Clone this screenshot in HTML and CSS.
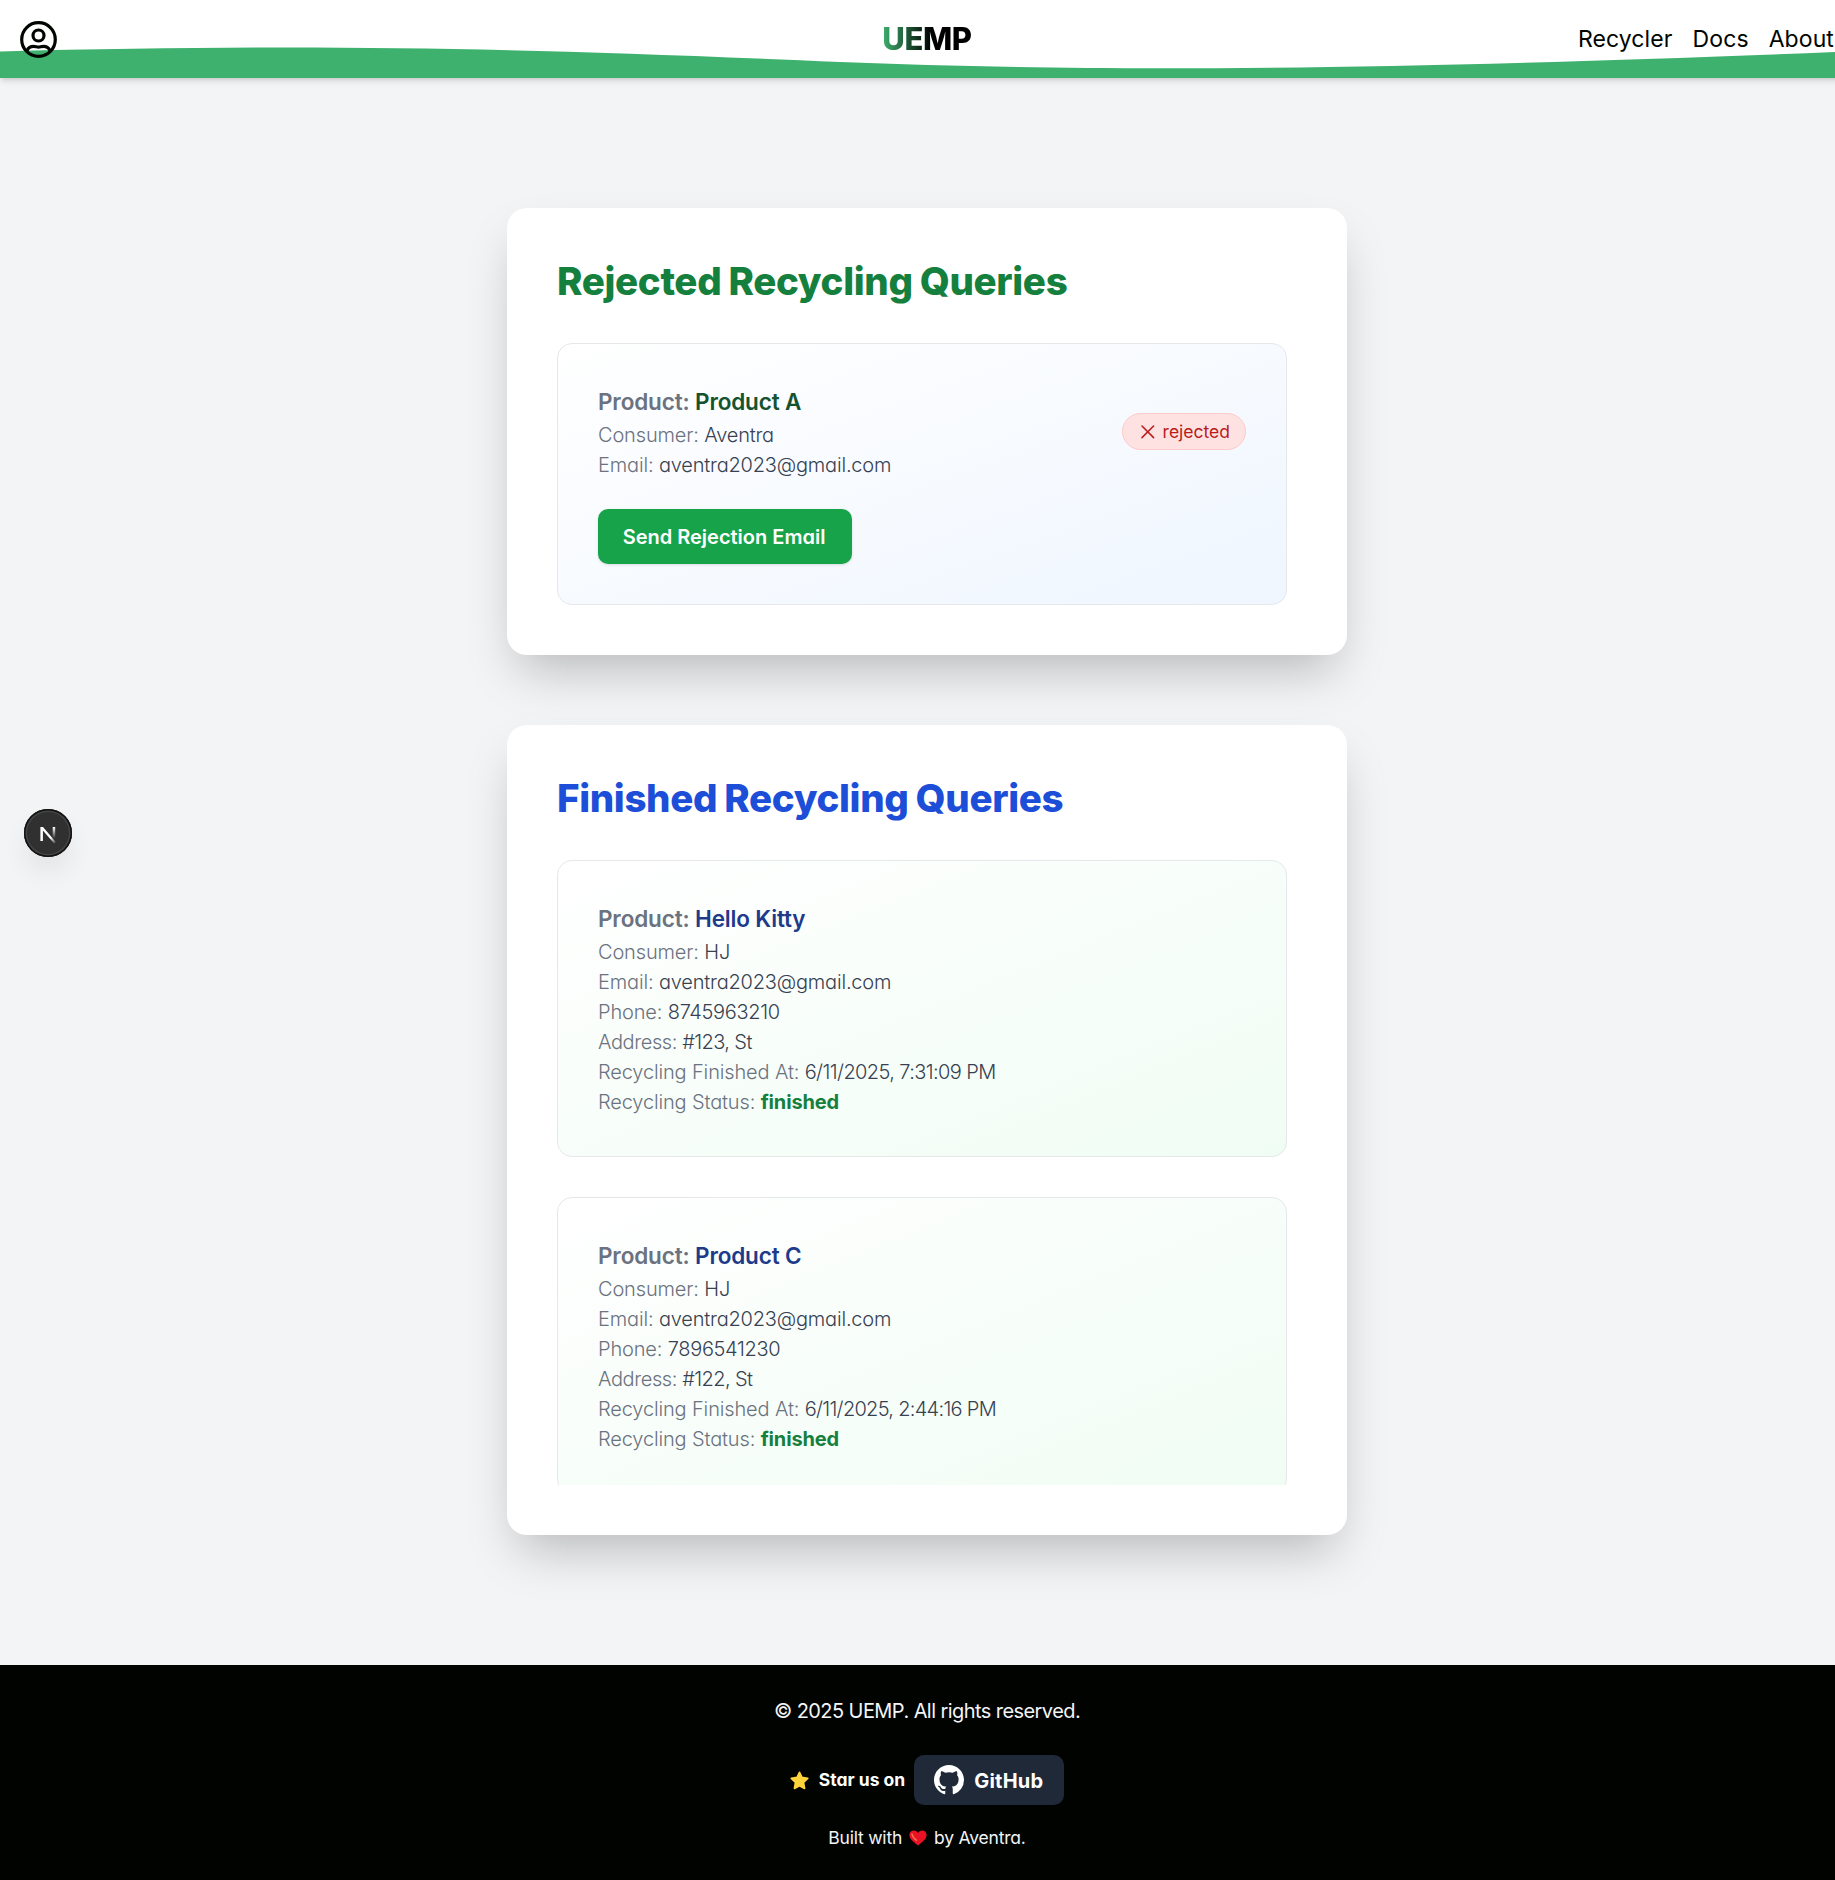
FILE: index.html
```html
<!DOCTYPE html>
<html lang="en">
<head>
<meta charset="utf-8">
<title>UEMP</title>
<link rel="stylesheet" href="styles.css">
</head>
<body>
<header class="navbar">
  <svg class="wave" viewBox="0 0 1835 78" preserveAspectRatio="none"><path d="M0 51.5C300 44 500 47 840 62C1080 71.5 1350 71.5 1835 52L1854 51V78H0Z" fill="#3fb16f"/></svg>
  <a class="profile"><svg viewBox="0 0 37 37" fill="none" stroke="#000500" stroke-width="3.2"><circle cx="18.5" cy="18.5" r="16.8"/><circle cx="18.500" cy="14.500" r="5.500"/><path d="M7 29.5C8.5 26.500 11 25.400 13.500 25.400c2.300 0 3 .8 5 .8s2.700-.8 5-.8c2.500 0 5 1.100 6.500 4.100"/></svg></a>
  <a class="brand">UEMP</a>
  <nav class="links"><a>Recycler</a><a>Docs</a><a>About</a></nav>
</header>
<main class="main">
  <section class="panel">
    <h1 class="title title-green">Rejected Recycling Queries</h1>
    <div class="scroll">
      <article class="item item-blue">
        <div class="row">
          <div>
            <p class="product">Product: <span class="green-name">Product A</span></p>
            <p class="line">Consumer: <span>Aventra</span></p>
            <p class="line">Email: <span>aventra2023@gmail.com</span></p>
          </div>
          <div class="badge"><svg viewBox="0 0 20 20" stroke="#b91c1c" stroke-width="1.5" stroke-linecap="round"><path d="M4 4L15.600 15.600M15.600 4L4 15.600"/></svg><span>rejected</span></div>
        </div>
        <button class="send"><span>Send Rejection Email</span></button>
      </article>
    </div>
  </section>
  <section class="panel">
    <h1 class="title title-blue">Finished Recycling Queries</h1>
    <div class="scroll scroll-tall">
      <article class="item item-green">
        <p class="product">Product: <span class="blue-name">Hello Kitty</span></p>
        <p class="line">Consumer: <span>HJ</span></p>
        <p class="line">Email: <span>aventra2023@gmail.com</span></p>
        <p class="line">Phone: <span class="number">8745963210</span></p>
        <p class="line address">Address: <span class="tight">#123, St</span></p>
        <p class="line">Recycling Finished At: <span class="tight">6/11/2025, 7:31:09 PM</span></p>
        <p class="line">Recycling Status: <span class="done">finished</span></p>
      </article>
      <article class="item item-green">
        <p class="product">Product: <span class="blue-name">Product C</span></p>
        <p class="line">Consumer: <span>HJ</span></p>
        <p class="line">Email: <span>aventra2023@gmail.com</span></p>
        <p class="line">Phone: <span class="number">7896541230</span></p>
        <p class="line address">Address: <span class="tight">#122, St</span></p>
        <p class="line">Recycling Finished At: <span class="tight tighter">6/11/2025, 2:44:16 PM</span></p>
        <p class="line">Recycling Status: <span class="done">finished</span></p>
      </article>
    </div>
  </section>
</main>
<footer class="footer">
  <p class="copy">© 2025 UEMP. All rights reserved.</p>
  <div class="star-row">
    <svg class="star" viewBox="0 0 18 18"><path d="M9 1.200l2.300 4.900 5.500.8-4 3.900 1 5.700L9 13.900l-4.800 2.600 1-5.700-4-3.900 5.500-.8z" fill="#ffd43b" stroke="#ffd43b" stroke-width="1.600" stroke-linejoin="round"/></svg>
    <span class="star-text">Star us on</span>
    <a class="github"><svg viewBox="0 0 16 16" fill="#fff"><path d="M8 0C3.580 0 0 3.580 0 8c0 3.540 2.290 6.530 5.470 7.590.4.070.55-.17.55-.38 0-.19-.01-.82-.01-1.490-2.010.37-2.530-.49-2.690-.94-.09-.23-.48-.94-.82-1.130-.28-.15-.68-.52-.01-.53.63-.01 1.080.58 1.230.82.72 1.210 1.870.87 2.330.66.070-.52.28-.87.51-1.070-1.780-.2-3.640-.89-3.640-3.950 0-.87.31-1.590.82-2.150-.08-.2-.36-1.020.08-2.120 0 0 .67-.21 2.200.82.64-.18 1.320-.27 2-.27s1.360.09 2 .27c1.530-1.040 2.200-.82 2.200-.82.44 1.100.16 1.920.08 2.120.51.56.82 1.270.82 2.150 0 3.070-1.870 3.750-3.650 3.950.29.25.54.73.54 1.480 0 1.070-.01 1.930-.01 2.200 0 .21.15.46.55.38A8.010 8.010 0 0016 8c0-4.420-3.580-8-8-8z"/></svg><span>GitHub</span></a>
  </div>
  <p class="built"><span>Built with</span><svg class="heart" viewBox="0 0 18 16"><path d="M9 15.500C3.500 11.300.4 8.400.4 5 .4 2.400 2.300.5 4.700.5 6.600.5 8.200 1.500 9 3 9.800 1.500 11.400.5 13.300.5c2.400 0 4.300 1.900 4.300 4.500 0 3.400-3.100 6.300-8.600 10.500z" fill="#e81224"/><path d="M3 4c.3 2.500 2 4.500 4.300 6.200" fill="none" stroke="#f4724f" stroke-width="1.500" stroke-linecap="round"/></svg><span>by Aventra.</span></p>
</footer>
<div class="dev-badge"><svg viewBox="0 0 48 48"><defs><linearGradient id="diagonal" x1="0" y1="0" x2="1" y2="1"><stop offset=".65" stop-color="#fff"/><stop offset="1" stop-color="#fff" stop-opacity="0"/></linearGradient><linearGradient id="stem" x1="0" y1="0" x2="0" y2="1"><stop offset="0" stop-color="#fff"/><stop offset="1" stop-color="#fff" stop-opacity="0"/></linearGradient></defs><path d="M16.400 32V18h2.600L32 33.200l-1.800 1.400L18.900 21.400V32z" fill="url(#diagonal)"/><path d="M28.700 18h2.500v11.500h-2.500z" fill="url(#stem)"/></svg></div>
</body>
</html>
```
FILE: styles.css
```css
* { box-sizing: border-box; margin: 0; }
html { font-size: 20px; overflow: hidden; }
body {
  width: 1854px;
  height: 1880px;
  overflow: hidden;
  display: flex;
  flex-direction: column;
  background: #f3f4f6;
  color: #000500;
  font-family: Inter, "Liberation Sans", sans-serif;
  font-feature-settings: "cv11";
  line-height: 1.5;
}
svg { display: block; }
.navbar {
  position: relative;
  height: 78px;
  flex: none;
  display: grid;
  grid-template-columns: 1fr auto 1fr;
  align-items: center;
  padding: 0 20px;
  background: #fff;
  box-shadow: 0 4px 6px -1px rgba(0,0,0,.12), 0 2px 4px -2px rgba(0,0,0,.12);
}
.wave { position: absolute; left: 0; top: 0; width: 1835px; height: 78px; }
.profile, .brand, .links { position: relative; }
.profile svg { width: 37px; height: 37px; }
.brand {
  font-size: 31px;
  font-weight: 800;
  line-height: 40px;
  letter-spacing: -.4px;
  background: linear-gradient(to right, #3fb16f, #000 55%);
  -webkit-background-clip: text;
  background-clip: text;
  color: transparent;
}
.links { justify-self: end; display: flex; gap: 20px; padding-top: 1px; font-size: 23px; letter-spacing: .1px; }
.main {
  flex: none;
  display: flex;
  flex-direction: column;
  align-items: center;
  gap: 70px;
  padding: 130px 0;
}
.panel {
  width: 840px;
  padding: 50px;
  border-radius: 20px;
  background: #fff;
  box-shadow: 0 25px 50px -12px rgba(0,0,0,.25);
}
.title {
  padding-top: 1px;
  margin-bottom: 39px;
  font-size: 38.5px;
  line-height: 45px;
  font-weight: 800;
  letter-spacing: -.35px;
  word-spacing: -1px;
  white-space: nowrap;
}
.title-green { color: #15803d; }
.title-blue { color: #1d4ed8; }
.scroll { padding-right: 10px; display: flex; flex-direction: column; gap: 40px; }
.scroll-tall { height: 625px; overflow: hidden; }
.item { flex: none; padding: 40px; border: 1px solid #e5e7eb; border-radius: 15px; }
.item-blue { background: linear-gradient(to bottom right, #fff, #eff6ff); }
.item-green { background: linear-gradient(to bottom right, #fff, #f0fdf4); }
.row { display: flex; justify-content: space-between; align-items: center; }
.product { font-size: 22.5px; line-height: 35px; font-weight: 600; letter-spacing: -.15px; color: #6b7280; }
.green-name { color: #14532d; }
.blue-name { color: #1e3a8a; }
.line { padding-top: 2px; font-size: 20px; font-weight: 300; line-height: 28px; letter-spacing: -.15px; color: #6b7280; }
.address { letter-spacing: -.4px; }
.line span { color: #374151; font-weight: 350; letter-spacing: -.2px; }
.line .number { letter-spacing: -.35px; }
.line .tight { letter-spacing: -.6px; }
.line .tighter { letter-spacing: -.7px; }
.line .done { color: #15803d; font-weight: 700; letter-spacing: -.15px; }
.badge {
  display: flex;
  align-items: center;
  gap: 5px;
  padding: 5px 15px;
  border: 1px solid #fecaca;
  border-radius: 20px;
  background: #fee2e2;
  color: #b91c1c;
  font-size: 17.5px;
  line-height: 25px;
}
.badge svg { width: 20px; height: 20px; }
.send {
  display: block;
  margin-top: 30px;
  width: 254px;
  height: 55px;
  padding: 0 2px 0 0;
  border: 0;
  border-radius: 10px;
  background: #16a34a;
  color: #fff;
  font: inherit;
  font-weight: 600;
  white-space: nowrap;
  box-shadow: 0 1px 3px rgba(0,0,0,.12);
}
.footer {
  height: 215px;
  flex: none;
  display: flex;
  flex-direction: column;
  align-items: center;
  padding-top: 31px;
  background: #000300;
  color: #f3f4f6;
}
.copy { letter-spacing: -.57px; }
.star-row { display: flex; align-items: center; height: 50px; margin-top: 29px; }
.star { width: 19px; height: 19px; margin-right: 10px; }
.star-text { font-size: 17.5px; font-weight: 700; margin-right: 9px; color: #fff; }
.github {
  display: flex;
  align-items: center;
  gap: 10px;
  width: 150px;
  height: 50px;
  padding: 0 20px;
  border-radius: 10px;
  background: #1f2937;
  color: #fff;
  font-weight: 700;
}
.github svg { width: 30px; height: 30px; flex: none; }
.github span { padding-top: 2px; letter-spacing: .2px; }
.built { display: flex; align-items: center; gap: 7px; margin-top: 20px; font-size: 17.5px; line-height: 25px; letter-spacing: -.2px; }
.heart { width: 18px; height: 16px; }
.dev-badge {
  position: fixed;
  left: 23.5px;
  top: 808.5px;
  width: 48px;
  height: 48px;
  border-radius: 50%;
  background: #303030;
  box-shadow: inset 0 0 0 1.5px #111, inset 0 0 0 3px #454545, 0 16px 32px -8px rgba(0,0,0,.14);
}
```
